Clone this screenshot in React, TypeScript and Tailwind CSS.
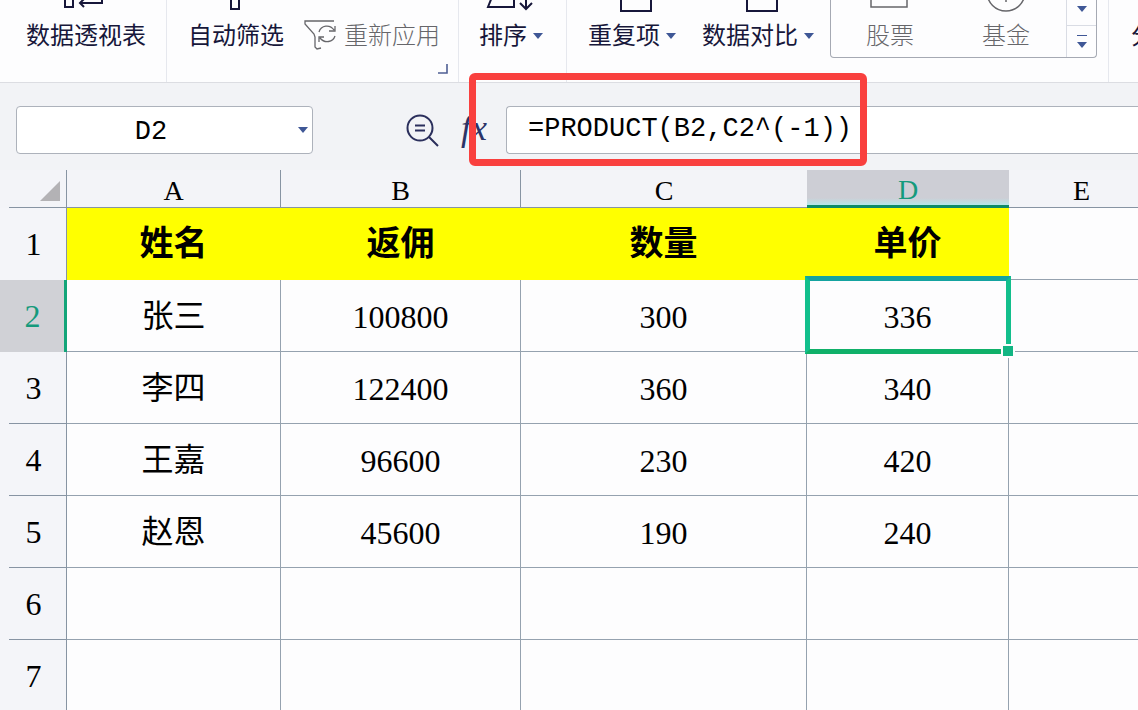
import clsx from "clsx";
import type { ReactNode } from "react";

const columns = ["A", "B", "C", "D", "E"];

const rows = [
  ["姓名", "返佣", "数量", "单价", ""],
  ["张三", "100800", "300", "336", ""],
  ["李四", "122400", "360", "340", ""],
  ["王嘉", "96600", "230", "420", ""],
  ["赵恩", "45600", "190", "240", ""],
  ["", "", "", "", ""],
  ["", "", "", "", ""],
];

const active = { row: 1, col: 3 };

function Caret() {
  return (
    <svg width="10" height="6" viewBox="0 0 10 6" className="shrink-0" aria-hidden="true">
      <path d="M0 0h10L5 6z" fill="#3f5796" />
    </svg>
  );
}

interface RibbonButtonProps {
  label: string;
  icon?: ReactNode;
  caret?: boolean;
  muted?: boolean;
}

function RibbonButton({ label, icon, caret, muted }: RibbonButtonProps) {
  return (
    <button
      type="button"
      className={clsx("flex shrink-0 flex-col items-start", muted ? "font-light text-[#66666a]" : "text-[#17173a]")}
    >
      <svg className="block h-3 w-px overflow-visible" aria-hidden="true" fill="none" stroke="currentColor" strokeWidth="2">
        {icon}
      </svg>
      <span className="mt-2 flex items-center gap-1.5 text-2xl leading-8 whitespace-nowrap">
        {label}
        {caret && <Caret />}
      </span>
    </button>
  );
}

function Ribbon() {
  return (
    <header className="flex h-[83px] shrink-0 overflow-hidden border-b border-[#dcdde2] bg-[#fdfdfe]">
      <div className="flex w-[167px] shrink-0 items-start border-r border-[#e6e8ee] pl-[26px]">
        <RibbonButton
          label="数据透视表"
          icon={<path d="M39 -2v9h8v-9M76 -2v5H54M58 -1l-4 4 4 4" />}
        />
      </div>

      <div className="relative flex w-[292px] shrink-0 items-start border-r border-[#e6e8ee] pl-[21px]">
        <RibbonButton label="自动筛选" icon={<path d="M43 -2v11h8v-11" />} />
        <button type="button" className="mt-5 ml-5 flex shrink-0 items-center gap-1.5 text-[#66666a]">
          <svg width="34" height="32" viewBox="0 0 34 32" fill="none" stroke="currentColor" strokeWidth="1.3" aria-hidden="true">
            <path d="M30 1H1v3l9 10 1 3v10l2 2 4-1" />
            <path d="M15 12c2-7 11-8 15-2M31 6v5h-6" />
            <path d="M31 16c-2 6-10 8-15 2M15 22v-5h5" />
          </svg>
          <span className="text-2xl leading-8 font-light whitespace-nowrap">重新应用</span>
        </button>
        <svg className="absolute right-2.5 bottom-2 h-2.5 w-2.5" viewBox="0 0 10 10" fill="none" stroke="#4f5f94" strokeWidth="1.6" aria-hidden="true">
          <path d="M9 0v9H0" />
        </svg>
      </div>

      <div className="flex w-[108px] shrink-0 items-start border-r border-[#e6e8ee] pl-5">
        <RibbonButton
          label="排序"
          caret
          icon={<path d="M13 -3L9 7h26v-10M47 -3v12M41 3l6 6 6-6" />}
        />
      </div>

      <div className="flex w-[263px] shrink-0 items-start gap-[26px] pl-[21px]">
        <RibbonButton label="重复项" caret icon={<path d="M33 -3v14h30v-14" />} />
        <RibbonButton label="数据对比" caret icon={<path d="M45 -3v14h30v-14" />} />
      </div>

      <div className="flex h-[58px] w-[267px] shrink-0 rounded-b border border-t-0 border-[#a5a9b3]">
        <div className="flex flex-1 items-start gap-[68px] pl-[35px]">
          <RibbonButton label="股票" muted icon={<path d="M5 -3v10h36v-10" strokeWidth="1.5" />} />
          <RibbonButton label="基金" muted icon={<path d="M5 -8a19 19 0 0 0 38 0M24 -3v5" strokeWidth="1.5" />} />
        </div>
        <div className="flex w-[30px] flex-col border-l border-[#d9dce4]">
          <button type="button" aria-label="下一行" className="flex h-[26px] items-center justify-center border-b border-[#d9dce4] pb-2">
            <Caret />
          </button>
          <button type="button" aria-label="更多" className="flex flex-1 flex-col items-center justify-center gap-1.5">
            <span className="h-px w-2.5 bg-[#3f5796]" />
            <Caret />
          </button>
        </div>
      </div>

      <div className="ml-[11px] flex min-w-0 flex-1 items-start border-l border-[#e6e8ee] pl-[22px]">
        <RibbonButton label="分" />
      </div>
    </header>
  );
}

function FormulaBar() {
  return (
    <div className="relative flex h-[87px] shrink-0 items-start bg-[#f2f3f6] pt-[23px] pl-4">
      <div className="flex h-12 w-[297px] shrink-0 items-center rounded border border-[#adb2bb] bg-white">
        <input
          aria-label="名称框"
          defaultValue="D2"
          className="w-[268px] bg-transparent pt-1 text-center font-['Liberation_Mono',monospace] text-[27px] leading-8 text-black outline-none"
        />
        <button type="button" aria-label="选择名称" className="flex flex-1 justify-end pr-1">
          <Caret />
        </button>
      </div>

      <button type="button" aria-label="浏览公式结果" className="mt-2 ml-[92px] shrink-0 text-[#2b2f5c]">
        <svg width="34" height="34" viewBox="0 0 34 34" fill="none" stroke="currentColor" strokeWidth="2" aria-hidden="true">
          <circle cx="15" cy="14" r="12.5" />
          <path d="M24 23l9 9M10 11.500h10M10 16.500h10" />
        </svg>
      </button>
      <button
        type="button"
        aria-label="插入函数"
        className="mt-1 ml-5 w-[30px] shrink-0 font-['Liberation_Serif',serif] text-[36px] leading-9 text-[#2b3468] italic"
      >
        fx
      </button>

      <div className="ml-[17px] flex h-12 min-w-0 flex-1 items-center rounded-l border border-r-0 border-[#adb2bb] bg-white pl-[21px]">
        <input
          aria-label="编辑栏"
          defaultValue="=PRODUCT(B2,C2^(-1))"
          className="w-full bg-transparent pb-0.5 font-['Liberation_Mono',monospace] text-[27px] leading-8 text-black outline-none"
        />
      </div>

      {/* red marker around the formula */}
      <div className="pointer-events-none absolute -top-[10px] left-[469px] h-[93px] w-[398px] rounded-md border-[7px] border-[#f9403e]" />
    </div>
  );
}

function Sheet() {
  return (
    <table className="w-full table-fixed border-separate border-spacing-0 text-[32px] leading-9 text-black">
      <colgroup>
        <col className="w-[67px]" />
        <col className="w-[214px]" />
        <col className="w-[240px]" />
        <col className="w-[286px]" />
        <col className="w-[202px]" />
        <col />
      </colgroup>
      <thead>
        <tr className="bg-[#f3f4f8]">
          <th className="border-r border-[#8794a3] p-0">
            <div className="ml-[9px] flex h-[38px] items-center justify-end border-b border-[#8794a3] pr-1.5">
              <svg width="20" height="20" viewBox="0 0 20 20" className="mt-1" aria-label="全选">
                <path d="M20 0v20H0z" fill="#b3b2b5" />
              </svg>
            </div>
          </th>
          {columns.map((name, i) => (
            <th
              key={name}
              scope="col"
              className={clsx(
                "h-[38px] p-0 pt-1 text-[28px] leading-8 font-normal",
                i === active.col
                  ? "border-b-[3px] border-[#0f8a68] bg-linear-to-b from-[#cdced5] from-80% to-[#b5e6ea] text-[#159a7c]"
                  : "border-b border-[#8794a3]",
                i < 2 && "border-r",
                i === 4 && "pl-4",
              )}
            >
              <div className="h-[31px]">{name}</div>
            </th>
          ))}
        </tr>
      </thead>
      <tbody>
        {rows.map((cells, r) => (
          <tr key={r}>
            <th
              scope="row"
              className={clsx(
                "p-0 font-normal",
                r === active.row
                  ? "border-r-[3px] border-[#12a579] bg-[#d0d1d6] text-[#159a7c]"
                  : "border-r border-[#8794a3] bg-[#f4f5f9]",
              )}
            >
              <div
                className={clsx(
                  "ml-[9px] flex h-[72px] items-center justify-center border-b pr-2",
                  r === 0 || r === active.row ? "border-transparent" : "border-[#8794a3]",
                )}
              >
                {r + 1}
              </div>
            </th>
            {cells.map((value, c) => {
              const heading = r === 0 && c < 4;
              const selected = r === active.row && c === active.col;
              return (
                <td
                  key={c}
                  className={clsx(
                    "relative h-[72px] border-b p-0 text-center",
                    heading
                      ? "border-[#ffff00] bg-[#ffff00] text-[34px] font-bold"
                      : "border-[#95a2af] bg-[#fdfdfe]",
                    c < 4 && "border-r",
                    r > 0 && c > 0 && "pt-0.5",
                  )}
                >
                  {value}
                  {selected && (
                    <>
                      <span className="absolute -top-1 -right-[3px] -bottom-[3px] -left-0.5 z-10 border-[5px] border-t-[#14a3a0] border-r-[#12bf8c] border-b-[#10b069] border-l-[#12bf8c]" />
                      <span className="absolute -right-[7px] -bottom-[7px] z-20 box-border h-3.5 w-3.5 border-2 border-[#fdfdfe] bg-[#12b583]" />
                    </>
                  )}
                </td>
              );
            })}
          </tr>
        ))}
      </tbody>
    </table>
  );
}

export default function App() {
  return (
    <div className="flex h-screen flex-col overflow-hidden bg-[#f3f4f8] font-['Liberation_Serif','Noto_Sans_CJK_SC',sans-serif]">
      <Ribbon />
      <FormulaBar />
      <main className="min-h-0 flex-1 overflow-hidden">
        <Sheet />
      </main>
    </div>
  );
}
